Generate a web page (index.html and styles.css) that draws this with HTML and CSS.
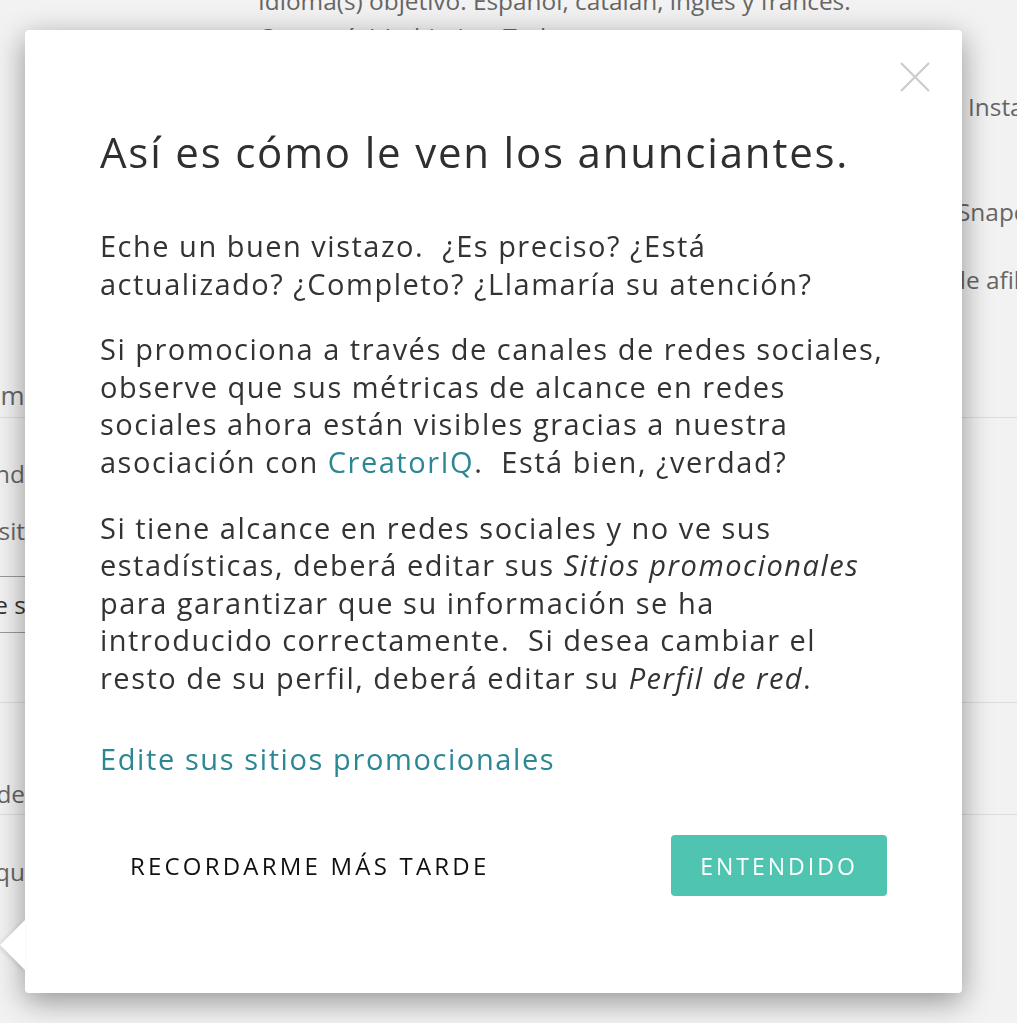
FILE: index.html
```html
<!DOCTYPE html>
<html lang="es">
<head>
<meta charset="utf-8">
<title>Así es cómo le ven los anunciantes</title>
<link rel="stylesheet" href="styles.css">
</head>
<body>
<div class="page">
  <div class="bg-top">
    <div class="bg-main">
      <p class="bg-line">Idioma(s) objetivo: Español, catalán, inglés y francés.</p>
      <p class="bg-line">Categoría(s) objetivo: Todas</p>
    </div>
    <div class="bg-side">
      <p class="bg-line side-insta">Instagram</p>
      <p class="bg-line side-snap">Snapchat</p>
      <p class="bg-line side-afil">de afiliados</p>
    </div>
  </div>
  <div class="bg-section sec-1">
    <div class="cut cut-wide"><span>Idioma</span></div>
  </div>
  <div class="bg-section sec-2">
    <div class="cut"><span>Mund</span></div>
    <div class="cut cut-gap"><span>Sitios promocionales: sit</span></div>
    <div class="bg-input"><div class="cut"><span>Introduce s</span></div></div>
  </div>
  <div class="bg-section sec-3">
    <div class="cut"><span>Fecha de</span></div>
  </div>
  <div class="bg-section sec-4">
    <div class="cut"><span>Aqu</span></div>
  </div>
</div>

<div class="modal" role="dialog" aria-labelledby="modal-title">
  <button class="close" aria-label="Cerrar">
    <svg width="30" height="30" viewBox="0 0 30 30"><path d="M1 1 L29 29 M29 1 L1 29" stroke="#cccccc" stroke-width="2.2" fill="none"/></svg>
  </button>
  <h1 id="modal-title" class="title">Así es cómo le ven los anunciantes.</h1>
  <p class="text">Eche un buen vistazo.&nbsp; ¿Es preciso? ¿Está<br>actualizado? ¿Completo? ¿Llamaría su atención?</p>
  <p class="text">Si promociona a través de canales de redes sociales,<br>observe que sus métricas de alcance en redes<br>sociales ahora están visibles gracias a nuestra<br>asociación con <a class="link" href="#">CreatorIQ</a>.&nbsp; Está bien, ¿verdad?</p>
  <p class="text">Si tiene alcance en redes sociales y no ve sus<br>estadísticas, deberá editar sus <em>Sitios promocionales</em><br>para garantizar que su información se ha<br>introducido correctamente.&nbsp; Si desea cambiar el<br>resto de su perfil, deberá editar su <em>Perfil de red</em>.</p>
  <a class="edit-link" href="#">Edite sus sitios promocionales</a>
  <div class="actions">
    <button class="btn-later">RECORDARME MÁS TARDE</button>
    <button class="btn-ok">ENTENDIDO</button>
  </div>
</div>
</body>
</html>
```

FILE: styles.css
```css
* { box-sizing: border-box; }
html, body { margin: 0; padding: 0; }
body {
  background: #f2f2f2;
  font-family: "Open Sans", "Noto Sans", sans-serif;
  overflow: hidden;
  width: 1017px;
  height: 1023px;
}
.page { width: 1017px; color: #666; font-size: 24.4px; }
.bg-line { margin: 0; line-height: 36px; white-space: nowrap; }

.bg-top {
  display: grid;
  grid-template-columns: 948px 1fr;
  height: 298px;
}
.bg-main { padding-left: 258px; margin-top: -17px; }
.bg-side { display: flex; flex-direction: column; }
.side-insta { margin-top: 89px; padding-left: 20px; }
.side-snap { margin-top: 69px; padding-left: 9px; }
.side-afil { margin-top: 32px; padding-left: 3px; }

.cut {
  width: 25px;
  display: flex;
  justify-content: flex-end;
  line-height: 36px;
  white-space: nowrap;
}
.cut-wide { width: 39px; font-size: 26px; }
.cut span { flex: none; }

.bg-section { border-bottom: 1px solid #dcdcdc; }
.sec-1 { padding-top: 79px; padding-bottom: 4px; }
.sec-2 { padding-top: 38px; padding-bottom: 69px; }
.cut-gap { margin-top: 21px; }
.bg-input {
  margin-top: 27px;
  width: 120px;
  margin-left: -40px;
  height: 57px;
  border: 1px solid #9a9a9a;
  display: flex;
  align-items: center;
  padding-left: 40px;
  color: #333;
}
.sec-3 { padding-top: 73px; padding-bottom: 2px; }
.sec-4 { padding-top: 39px; border-bottom: none; }

.modal {
  position: fixed;
  left: 25px;
  top: 30px;
  width: 937px;
  height: 963px;
  background: #fff;
  border-radius: 4px;
  box-shadow: 0 8px 30px rgba(0,0,0,0.4);
  padding: 98px 60px 0 75px;
  color: #333;
}
.modal::before {
  content: "";
  position: absolute;
  left: -25px;
  top: 890px;
  width: 0;
  height: 0;
  border-top: 25px solid transparent;
  border-bottom: 25px solid transparent;
  border-right: 25px solid #fff;
  filter: drop-shadow(-2px 1px 2px rgba(0,0,0,0.12));
}
.close {
  position: absolute;
  top: 32px;
  right: 32px;
  width: 30px;
  height: 30px;
  padding: 0;
  border: 0;
  background: none;
  cursor: pointer;
}
.close svg { display: block; }

.title {
  margin: 0 0 51px 0;
  font-size: 42px;
  font-weight: 400;
  line-height: 48px;
  letter-spacing: 1.8px;
  color: #2f2f2f;
  white-space: nowrap;
}
.text {
  margin: 0 0 28px 0;
  font-size: 29px;
  line-height: 37.6px;
  letter-spacing: 1.5px;
  white-space: nowrap;
}
.text em { font-style: italic; }
.link, .edit-link { color: #2b8793; text-decoration: none; }
.edit-link {
  display: block;
  margin-top: 43px;
  font-size: 29px;
  line-height: 37.6px;
  letter-spacing: 1.6px;
}
.actions {
  margin-top: 58px;
  margin-right: 15px;
  display: flex;
  justify-content: space-between;
  align-items: center;
}
.btn-later, .btn-ok {
  font-family: "Open Sans", "Noto Sans", sans-serif;
  font-size: 24px;
  border: 0;
  cursor: pointer;
}
.btn-later {
  background: none;
  color: #111;
  padding: 0 30px;
  height: 61px;
  letter-spacing: 3.2px;
}
.btn-ok {
  background: #4fc5b1;
  color: #fff;
  width: 216px;
  height: 61px;
  border-radius: 4px;
  font-size: 23px;
  letter-spacing: 3px;
}
```
